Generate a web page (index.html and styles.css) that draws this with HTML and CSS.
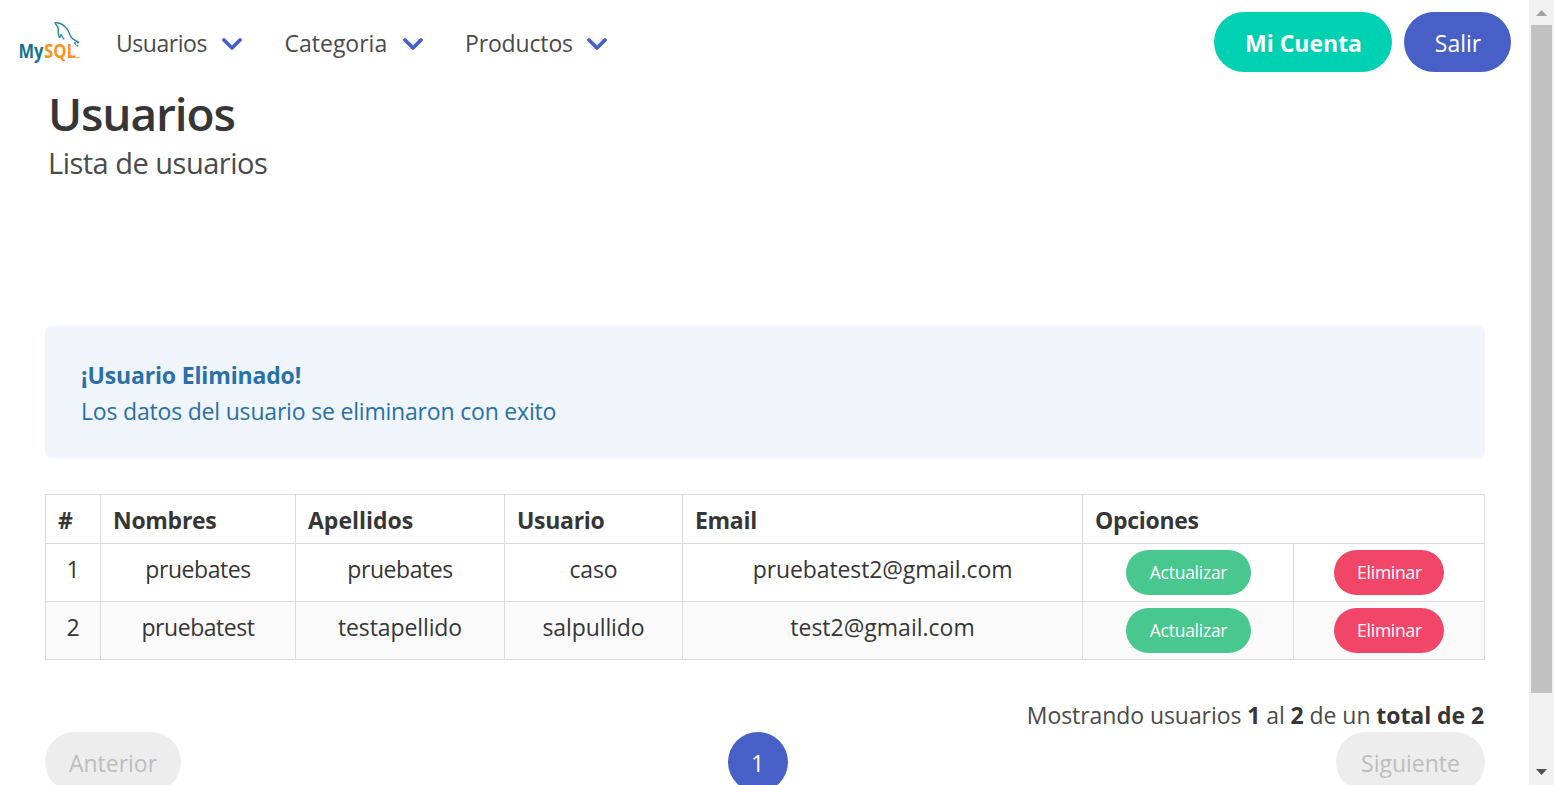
FILE: index.html
```html
<!DOCTYPE html>
<html lang="es">
<head>
<meta charset="utf-8">
<title>Usuarios</title>
<link rel="stylesheet" href="styles.css">
</head>
<body>
<div class="page">
  <nav class="navbar">
    <a class="brand">
      <svg class="logo" width="64" height="48" viewBox="0 0 64 48" role="img" aria-label="MySQL">
        <path d="M38 4.500c-1.600-1.500-1.600-2.200 1-1.800 3.500.3 6 1.800 8.500 4.300 3 3 4 6 5 9 .6 2 2.500 3.500 8.500 6.500M38 4.500c1.600 1.500 2.500 3 2.300 5.500-.2 2.500-.3 5 1 7.500 1.500-.2 1.200-2 1.700-3.200 1 1.500 1.500 3.500 3.300 5.200" fill="none" stroke="#2a869c" stroke-width="1.400" stroke-linejoin="round"/>
        <path d="M61 22.500l-5 .500 4.500 3.500" fill="none" stroke="#2a869c" stroke-width="1.300" stroke-dasharray="2 .8"/>
        <text class="logo-my" x="0.500" y="38" textLength="25" lengthAdjust="spacingAndGlyphs">My</text>
        <text class="logo-sql" x="26" y="38" textLength="32" lengthAdjust="spacingAndGlyphs">SQL</text>
        <path d="M58.500 37.500h3" stroke="#f5a94a" stroke-width="1.300"/>
      </svg>
    </a>
    <div class="menu">
      <a class="menu-item"><span class="t-usuarios">Usuarios</span><svg class="arrow" viewBox="0 0 20 14"><path d="M2 3l8 8 8-8"/></svg></a>
      <a class="menu-item"><span class="t-categoria">Categoria</span><svg class="arrow" viewBox="0 0 20 14"><path d="M2 3l8 8 8-8"/></svg></a>
      <a class="menu-item"><span class="t-productos">Productos</span><svg class="arrow" viewBox="0 0 20 14"><path d="M2 3l8 8 8-8"/></svg></a>
    </div>
    <div class="actions">
      <a class="button account">Mi Cuenta</a>
      <a class="button logout">Salir</a>
    </div>
  </nav>
  <header class="heading">
    <h1 class="title"><span>Usuarios</span></h1>
    <h2 class="subtitle"><span>Lista de usuarios</span></h2>
  </header>
  <main class="content">
    <div class="notice">
      <strong class="notice-title">¡Usuario Eliminado!</strong>
      <span class="notice-text">Los datos del usuario se eliminaron con exito</span>
    </div>
    <table class="table">
      <colgroup><col class="c-num"><col class="c-name"><col class="c-last"><col class="c-user"><col class="c-email"><col class="c-update"><col class="c-delete"></colgroup>
      <thead>
        <tr><th>#</th><th>Nombres</th><th class="wide">Apellidos</th><th>Usuario</th><th>Email</th><th colspan="2">Opciones</th></tr>
      </thead>
      <tbody>
        <tr><td>1</td><td class="tight">pruebates</td><td class="tight">pruebates</td><td>caso</td><td>pruebatest2@gmail.com</td><td><a class="pill update">Actualizar</a></td><td><a class="pill delete">Eliminar</a></td></tr>
        <tr><td>2</td><td class="tight">pruebatest</td><td>testapellido</td><td>salpullido</td><td class="wide">test2@gmail.com</td><td><a class="pill update">Actualizar</a></td><td><a class="pill delete">Eliminar</a></td></tr>
      </tbody>
    </table>
    <p class="summary"><span>Mostrando usuarios <strong>1</strong> al <strong>2</strong> de un <strong>total de 2</strong></span></p>
    <nav class="pagination">
      <a class="page-link previous">Anterior</a>
      <a class="page-link current">1</a>
      <a class="page-link next">Siguiente</a>
    </nav>
  </main>
</div>
<div class="scrollbar">
  <svg class="scroll-arrow" viewBox="0 0 25 25"><path d="M7 16h11l-5.500-6z" fill="#a3a3a3"/></svg>
  <div class="thumb"></div>
  <svg class="scroll-arrow" viewBox="0 0 25 25"><path d="M7 9h11l-5.500 6z" fill="#505050"/></svg>
</div>
</body>
</html>
```
FILE: styles.css
```css
* { box-sizing: border-box; }
body {
  margin: 0;
  width: 1554px;
  height: 785px;
  overflow: hidden;
  display: flex;
  background: #fff;
  color: #4a4a4a;
  font: 400 23px/36px "Open Sans", "Noto Sans", sans-serif;
  white-space: nowrap;
}
.page { width: 1529px; height: 785px; overflow: hidden; }
.navbar { display: flex; height: 84px; padding: 0 18px; align-items: center; }
.brand { display: flex; width: 80px; height: 44px; }
.logo { flex: none; overflow: visible; }
.logo-my, .logo-sql { font: 700 19.5px/20px "Open Sans", sans-serif; }
.logo-my { fill: #12758f; }
.logo-sql { fill: #f7941d; }
.menu { display: flex; padding: 2px 0 0 18px; gap: 42.500px; }
.menu-item { display: flex; align-items: center; gap: 15px; height: 36px; }
.arrow { width: 20px; height: 14px; margin-top: 1px; fill: none; stroke: #485fc7; stroke-width: 3.800; stroke-linecap: round; stroke-linejoin: round; }
.t-usuarios { width: 91px; letter-spacing: -0.45px; }
.t-categoria { width: 103px; }
.t-productos { width: 107px; letter-spacing: -0.15px; }
.actions { display: flex; gap: 12px; margin-left: auto; }
.button { display: flex; align-items: center; justify-content: center; height: 60px; padding: 2px 0 0 1px; border-radius: 30px; color: #fff; }
.account { width: 178px; background: #00d1b2; font-weight: 700; }
.logout { width: 107px; background: #485fc7; }
.heading { height: 242px; padding: 2px 48px 0; }
.title { margin: 0; font-size: 46px; line-height: 54px; font-weight: 600; color: #363636; letter-spacing: -1.1px; }
.subtitle { margin: 4px 0 0; font-size: 29px; line-height: 38px; font-weight: 400; letter-spacing: -0.5px; }
.content { padding: 0 44px 0 45px; }
.notice { display: flex; flex-direction: column; align-items: flex-start; height: 132px; padding: 31px 36px; border-radius: 6px; background: #eff5fb; color: #296fa8; }
.notice-title { letter-spacing: -0.15px; }
.notice-text { letter-spacing: -0.19px; }
.table { width: 1440px; margin-top: 36px; table-layout: fixed; border-collapse: separate; border-spacing: 0; border: solid #dbdbdb; border-width: 1px 0 0 1px; color: #363636; }
.c-num { width: 55px; }
.c-name { width: 195px; }
.c-last { width: 209px; }
.c-user { width: 178px; }
.c-email { width: 400px; }
.c-update { width: 211px; }
.c-delete { width: 191px; }
th, td { padding: 6px 12px; border: solid #dbdbdb; border-width: 0 1px 1px 0; vertical-align: top; }
th { height: 49px; padding-top: 7px; padding-bottom: 5px; text-align: left; font-weight: 700; letter-spacing: -0.3px; }
td { height: 58px; padding-top: 7px; text-align: center; letter-spacing: -0.1px; }
.tight { letter-spacing: -0.45px; }
.wide { letter-spacing: 0; }
tbody tr:nth-child(2) { background: #fafafa; }
td:nth-child(n+6) { padding: 6px 0; }
.pill { display: flex; align-items: center; justify-content: center; height: 45px; margin: 0 auto; padding: 0 0 1px 1px; border-radius: 23px; color: #fff; font-size: 17.5px; letter-spacing: -0.25px; }
.update { width: 125px; background: #48c78e; }
.delete { width: 110px; background: #f14668; }
.summary { margin: 37px 0 0; padding-right: 1px; text-align: right; letter-spacing: -0.07px; }
.summary strong { color: #363636; }
.pagination { display: flex; justify-content: space-between; margin-top: -1px; }
.page-link { display: flex; flex: none; align-items: center; justify-content: center; height: 60px; padding-top: 2px; border-radius: 30px; }
.previous { width: 136px; }
.next { width: 149px; }
.previous, .next { background: #ededed; color: #bdbdbd; }
.current { width: 60px; margin-right: 2px; background: #485fc7; color: #fff; }
.scrollbar { width: 25px; height: 785px; background: #f1f1f1; display: flex; flex-direction: column; align-items: center; }
.scroll-arrow { width: 25px; height: 25px; }
.thumb { width: 21px; height: 668px; margin-bottom: 67px; background: #c1c1c1; }
```
